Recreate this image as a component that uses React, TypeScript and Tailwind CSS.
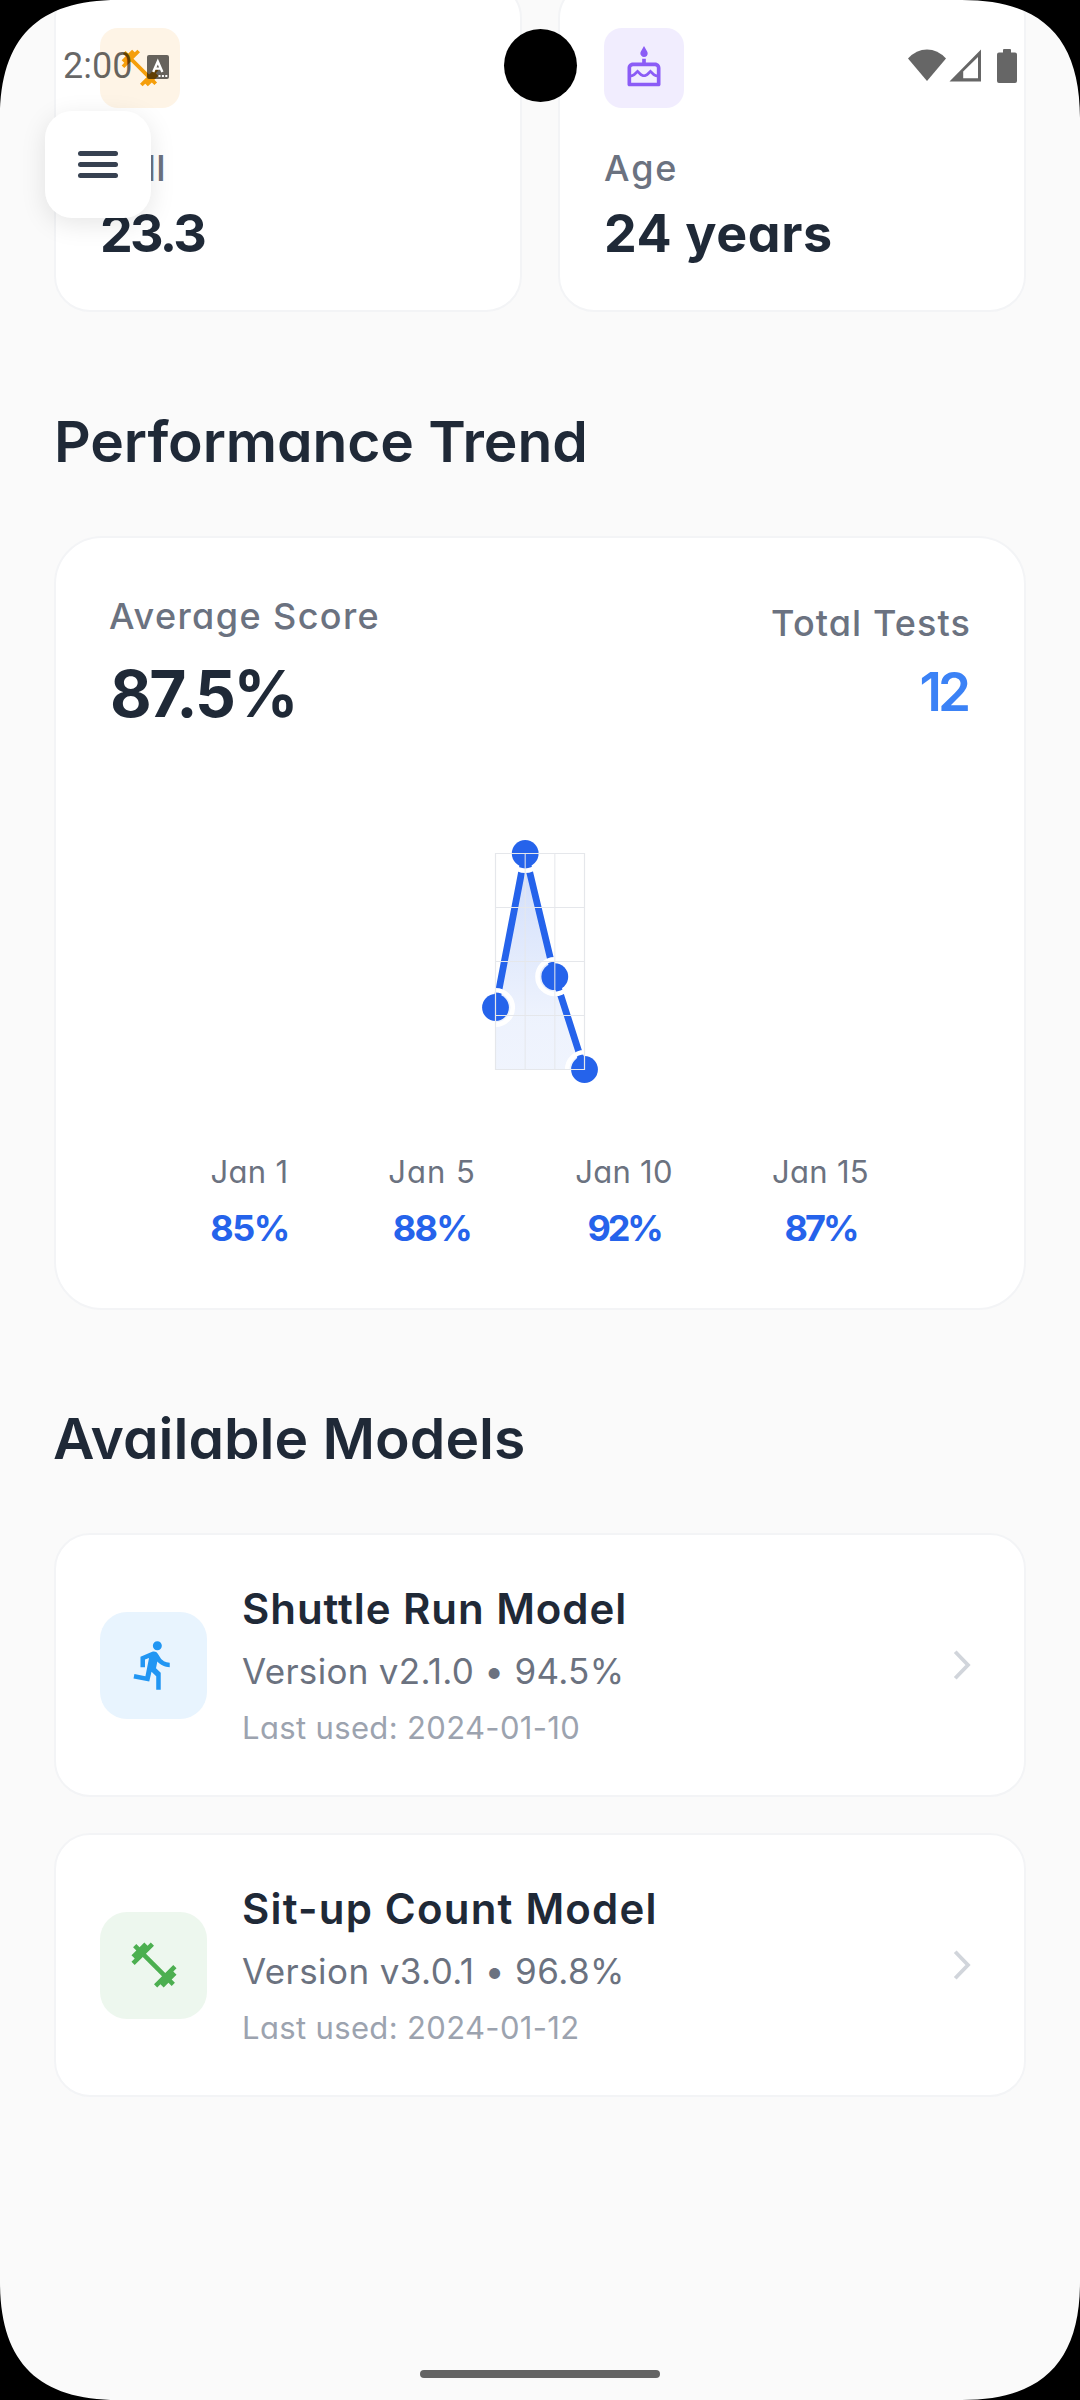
import type { ReactNode } from "react";
import { MdDirectionsRun, MdFitnessCenter, MdOutlineCake } from "react-icons/md";

const GRID_X = [35.5, 65.2, 94.8, 124.5];
const GRID_Y = [43.5, 97.5, 151.5, 205.5, 259.5];
const POINTS = [
  [35.5, 197.5],
  [65.2, 43.5],
  [94.8, 166.7],
  [124.5, 259.5],
];

const SCORES = [
  { date: "Jan 1", score: "85%", width: "w-[77px]", spacing: "tracking-[0.3px]", scoreSpacing: "tracking-[-1.5px]" },
  { date: "Jan 5", score: "88%", width: "w-[86px]", spacing: "tracking-[1px]", scoreSpacing: "tracking-[-1.7px]" },
  { date: "Jan 10", score: "92%", width: "w-[96px]", spacing: "tracking-[0.3px]", scoreSpacing: "tracking-[-3.2px]" },
  { date: "Jan 15", score: "87%", width: "w-[95px]", spacing: "tracking-[0.3px]", scoreSpacing: "tracking-[-2.9px]" },
];

function StatCard({ icon, tint, label, value }: { icon: ReactNode; tint: string; label: ReactNode; value: ReactNode }) {
  return (
    <div className="h-[330px] flex-1 rounded-[36px] border-2 border-[#f3f4f6] bg-white p-[44px]">
      <div className={`flex size-[80px] items-center justify-center rounded-[18px] ${tint}`}>{icon}</div>
      <div className="mt-[33px] text-[36px] leading-[54px] font-medium text-[#6b7280]">{label}</div>
      <div className="mt-[6px] text-[52px] leading-[66px] font-bold">{value}</div>
    </div>
  );
}

function TrendChart() {
  const line = POINTS.map((p) => p.join(",")).join(" ");
  return (
    <svg className="h-[290px] w-[160px]" viewBox="0 0 160 290">
      <defs>
        <linearGradient id="area" x1="0" y1="43" x2="0" y2="260" gradientUnits="userSpaceOnUse">
          <stop offset="0" stopColor="#2563eb" stopOpacity="0.22" />
          <stop offset="0.75" stopColor="#2563eb" stopOpacity="0.08" />
          <stop offset="1" stopColor="#2563eb" stopOpacity="0.07" />
        </linearGradient>
        <clipPath id="plot">
          <rect x="35.5" y="43.5" width="89" height="216" />
        </clipPath>
      </defs>
      <polygon points={`35.5,259.5 ${line}`} fill="url(#area)" />
      <polyline points={line} fill="none" stroke="#2563eb" strokeWidth="6.8" strokeLinejoin="round" />
      <g clipPath="url(#plot)">
        {POINTS.map(([x, y]) => (
          <circle key={x} cx={x} cy={y} r="17.3" fill="none" stroke="#ffffff" strokeWidth="4.600" />
        ))}
      </g>
      {POINTS.map(([x, y]) => (
        <circle key={x} cx={x} cy={y} r="13.4" fill="#2563eb" />
      ))}
      <g stroke="#e5e7eb" strokeWidth="1.2">
        {GRID_Y.map((y) => (
          <line key={y} x1="35" x2="125" y1={y} y2={y} />
        ))}
        {GRID_X.map((x) => (
          <line key={x} x1={x} x2={x} y1="43" y2="260" strokeOpacity={x === 35.5 || x === 124.5 ? 1 : 0.85} />
        ))}
      </g>
    </svg>
  );
}

function ModelCard(props: { icon: ReactNode; tint: string; name: ReactNode; version: ReactNode; used: string }) {
  return (
    <div className="flex h-[264px] items-center rounded-[36px] border-2 border-[#f3f4f6] bg-white pr-[52px] pl-[44px]">
      <div className={`flex size-[107px] shrink-0 items-center justify-center rounded-[27px] ${props.tint}`}>
        {props.icon}
      </div>
      <div className="ml-[35px] flex-1 whitespace-nowrap">
        <div className="text-[42px] leading-[60px] font-semibold">{props.name}</div>
        <div className="mt-[5px] text-[35px] leading-[54px] text-[#6b7280]">{props.version}</div>
        <div className="mt-[6px] text-[31px] leading-[48px] tracking-[0.35px] text-[#9ca3af]">{props.used}</div>
      </div>
      <svg className="h-[32px] w-[20px]" viewBox="0 0 20 32" fill="none" stroke="#d1d5db" strokeWidth="3.8">
        <path d="M3.200 2.700 16 16 3.200 29.300" />
      </svg>
    </div>
  );
}

function StatusBar() {
  return (
    <div className="absolute inset-x-0 top-0 flex h-[131px] items-center justify-between px-[63px]">
      <div className="flex items-center gap-[15px]">
        <span className="font-[Roboto] text-[36px] leading-none text-black/60">2:00</span>
        <svg className="mt-[3px] h-[24px] w-[22px]" viewBox="0 0 22 24">
          <rect width="22" height="24" rx="2" fill="#000000" fillOpacity="0.6" />
          <path d="M6.2 17 10.8 6.5 15.4 17M8 13.6h5.6" fill="none" stroke="#fff" strokeWidth="2.4" />
          <path d="M11.5 20h2v2h-2zM14.9 20h2v2h-2zM18.3 20h2v2h-2z" fill="#fff" />
        </svg>
      </div>
      <svg className="h-[36px] w-[109px]" viewBox="0 0 109 36" fill="#666666">
        <path d="M0 10.5Q8.300 1.500 19 1.500Q29.700 1.500 38 10.500L19 33Z" />
        <path fillRule="evenodd" d="M73 1.500V33.500H41.500ZM70 9 55.200 23.500V30.200H70Z" />
        <path d="M95 2q0-1 1-1h6q1 0 1 1v2.500h4q2 0 2 2V33q0 2-2 2H91q-2 0-2-2V6.500q0-2 2-2h4Z" />
      </svg>
    </div>
  );
}

function ScreenCorner({ className }: { className: string }) {
  return (
    <svg className={`absolute size-[118px] ${className}`} viewBox="0 0 118 118">
      <path d="M0 118C0 38 38 0 118 0H0Z" fill="#000000" />
    </svg>
  );
}

export default function App() {
  return (
    <div className="relative h-[2400px] w-[1080px] overflow-hidden bg-[#fafafa] font-['Inter',sans-serif] text-[#1f2937] [font-feature-settings:'cv11']">
      <main className="flex flex-col px-[54px]">
        <section className="-mt-[18px] flex gap-[36px]">
          <StatCard
            tint="bg-[#fef4e6]"
            icon={<MdFitnessCenter className="size-[44px] text-[#f59e0b]" />}
            label={<span className="tracking-[-0.3px]">BMI</span>}
            value={<span className="tracking-[-2.7px]">23.3</span>}
          />
          <StatCard
            tint="bg-[#f1edfe]"
            icon={<MdOutlineCake className="size-[44px] text-[#8b5cf6]" />}
            label={<span className="tracking-[1.9px]">Age</span>}
            value={<span className="tracking-[0.6px]">24 years</span>}
          />
        </section>

        <h2 className="mt-[90px] text-[57px] leading-[80px] font-semibold tracking-[-0.1px]">Performance Trend</h2>
        <section className="mt-[54px] h-[774px] rounded-[48px] border-2 border-[#f3f4f6] bg-white p-[54px]">
          <div className="flex h-[146px] items-start justify-between">
            <div>
              <div className="-ml-px text-[36px] leading-[48px] font-medium tracking-[1.4px] text-[#6b7280]">
                Average Score
              </div>
              <div className="mt-[9px] text-[64px] leading-[90px] font-bold tracking-[-2.3px]">87.5%</div>
            </div>
            <div className="flex flex-col items-end pt-[4px]">
              <div className="-mr-px text-[36px] leading-[54px] font-medium tracking-[1.1px] text-[#6b7280]">
                Total Tests
              </div>
              <div className="mt-[9px] mr-[3px] text-[53px] leading-[66px] font-semibold tracking-[-4px] text-[#3b82f6]">
                12
              </div>
            </div>
          </div>
          <div className="mt-[72px] flex justify-center">
            <TrendChart />
          </div>
          <div className="mt-[51px] flex justify-evenly">
            {SCORES.map((s) => (
              <div key={s.date} className={`-ml-px flex flex-col items-center whitespace-nowrap ${s.width}`}>
                <div className={`text-[31px] leading-[42px] text-[#6b7280] ${s.spacing}`}>{s.date}</div>
                <div className={`mt-[11px] text-[36px] leading-[48px] font-bold text-[#2563eb] ${s.scoreSpacing}`}>
                  {s.score}
                </div>
              </div>
            ))}
          </div>
        </section>

        <h2 className="mt-[89px] -ml-px text-[57px] leading-[80px] font-semibold">Available Models</h2>
        <section className="mt-[54px] flex flex-col gap-[36px]">
          <ModelCard
            tint="bg-[#e8f4fe]"
            icon={<MdDirectionsRun className="size-[54px] text-[#2196f3]" />}
            name={<span className="tracking-[0.93px]">Shuttle Run Model</span>}
            version={<span className="tracking-[0.3px]">Version v2.1.0 • 94.5%</span>}
            used="Last used: 2024-01-10"
          />
          <ModelCard
            tint="bg-[#edf7ee]"
            icon={<MdFitnessCenter className="size-[54px] text-[#4caf50]" />}
            name={<span className="tracking-[1.2px]">Sit-up Count Model</span>}
            version={<span className="tracking-[0.42px]">Version v3.0.1 • 96.8%</span>}
            used="Last used: 2024-01-12"
          />
        </section>
      </main>

      <button
        aria-label="Open menu"
        className="absolute top-[111px] left-[45px] flex h-[107px] w-[106px] flex-col items-center justify-center gap-[6.8px] rounded-[27px] bg-white shadow-[0_6px_26px_rgba(0,0,0,0.10)]"
      >
        <span className="h-[4.2px] w-[40px] rounded-full bg-[#374151]" />
        <span className="h-[4.2px] w-[40px] rounded-full bg-[#374151]" />
        <span className="h-[4.2px] w-[40px] rounded-full bg-[#374151]" />
      </button>

      <StatusBar />
      <div className="absolute top-[29px] left-[503.500px] size-[73px] rounded-full bg-black" />
      <div className="absolute top-[2370px] left-[420px] h-[8px] w-[240px] rounded-full bg-[#646464]" />
      <ScreenCorner className="top-0 left-0" />
      <ScreenCorner className="top-0 right-0 -scale-x-100" />
      <ScreenCorner className="bottom-0 left-0 -scale-y-100" />
      <ScreenCorner className="right-0 bottom-0 -scale-100" />
    </div>
  );
}
